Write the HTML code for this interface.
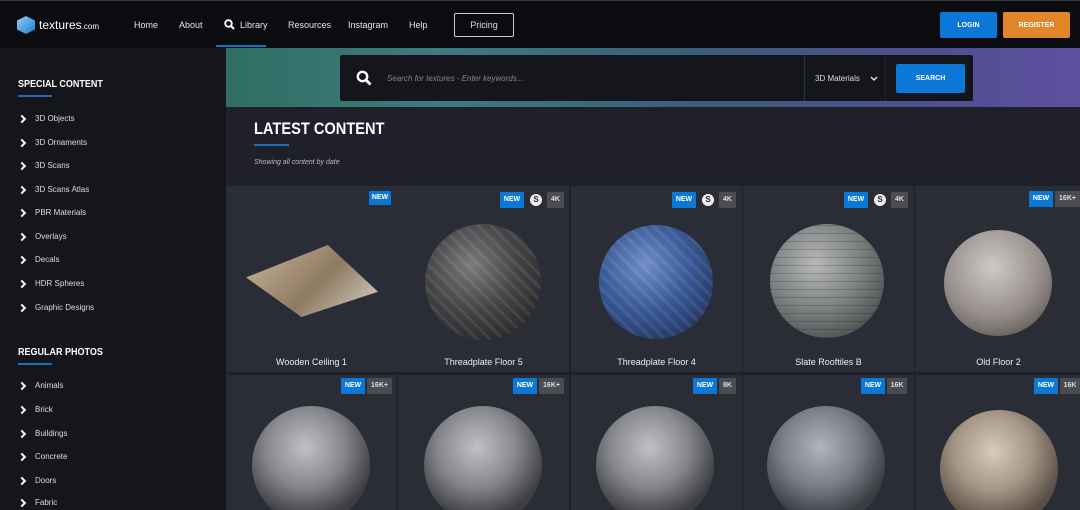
<!DOCTYPE html>
<html style="width:1080px;height:510px;overflow:hidden"><head><meta charset="utf-8"><style>
*{margin:0;padding:0;box-sizing:border-box}
body{width:1080px;height:510px;overflow:hidden;background:#1f2029;font-family:"Liberation Sans",sans-serif;color:#fff}
#w{position:relative;width:1080px;height:510px;overflow:hidden}
.a{position:absolute}
.hdr{left:0;top:0;width:1080px;height:48px;background:#0b0c10;border-top:1px solid #333}
.nav{font-size:9px;color:#e6e6e6;top:20px}
.side{left:0;top:48px;width:226px;height:462px;background:#15161c}
.sh{font-size:10px;font-weight:bold;left:18px;transform:scaleX(.9);transform-origin:left}
.ul{height:2px;background:#1e6fc0;width:34px;left:18px}
.li{left:35px;font-size:8px;color:#ddd}
.chev{position:absolute;left:19px;width:6px;height:6px;border-right:2px solid #fff;border-top:2px solid #fff;transform:rotate(45deg)}
.banner{left:226px;top:48px;width:854px;height:59px;background:linear-gradient(90deg,#2f6e62 0%,#3d7b80 25%,#3a5e7a 55%,#4d4f8e 80%,#5e4f9e 100%)}
.card{background:#2a2d36;width:171px;height:186px}
.nm{font-size:9px;color:#eee;width:171px;text-align:center}
.bd{font-size:7px;font-weight:bold;height:16px;line-height:16px;text-align:center;position:absolute}
.nw{background:#0b78d8;color:#fff}
.gr{background:#4a4c52;color:#ddd}
.sp{border-radius:50%}
.s{position:absolute;width:12px;height:12px;border-radius:50%;background:#eee;color:#222;font-size:8px;font-weight:bold;text-align:center;line-height:12px}
</style></head><body><div id="w">
<div class="a hdr"></div>
<div class="a" style="left:17px;top:16px;width:18px;height:18px;background:linear-gradient(135deg,#8fd0ff,#1f7cc8);clip-path:polygon(50% 0,100% 25%,100% 75%,50% 100%,0 75%,0 25%)"></div>
<div class="a" style="left:39px;top:18px;font-size:12px;color:#fff">textures<span style="font-size:8px">.com</span></div>
<div class="a nav" style="left:134px">Home</div>
<div class="a nav" style="left:179px">About</div>
<svg class="a" style="left:224px;top:19px" width="11" height="11" viewBox="0 0 11 11"><circle cx="4.5" cy="4.5" r="3.3" fill="none" stroke="#fff" stroke-width="1.8"/><path d="M7 7L10 10" stroke="#fff" stroke-width="2"/></svg>
<div class="a nav" style="left:240px">Library</div>
<div class="a" style="left:216px;top:45px;width:50px;height:2px;background:#1e6fc0"></div>
<div class="a nav" style="left:288px">Resources</div>
<div class="a nav" style="left:348px">Instagram</div>
<div class="a nav" style="left:409px">Help</div>
<div class="a" style="left:454px;top:13px;width:60px;height:24px;border:1px solid #ccc;border-radius:2px;font-size:9px;color:#ddd;text-align:center;line-height:22px">Pricing</div>
<div class="a" style="left:940px;top:12px;width:57px;height:26px;background:#0b78d8;border-radius:2px;font-size:7px;font-weight:bold;text-align:center;padding-top:10px">LOGIN</div>
<div class="a" style="left:1003px;top:12px;width:67px;height:26px;background:#e3862a;border-radius:2px;font-size:7px;font-weight:bold;text-align:center;padding-top:10px">REGISTER</div>

<div class="a side"></div>
<div class="a sh" style="top:79px">SPECIAL CONTENT</div>
<div class="a ul" style="top:95px"></div>
<div class="chev" style="top:116px"></div><div class="a li" style="top:114px">3D Objects</div>
<div class="chev" style="top:140px"></div><div class="a li" style="top:138px">3D Ornaments</div>
<div class="chev" style="top:163px"></div><div class="a li" style="top:161px">3D Scans</div>
<div class="chev" style="top:187px"></div><div class="a li" style="top:185px">3D Scans Atlas</div>
<div class="chev" style="top:210px"></div><div class="a li" style="top:208px">PBR Materials</div>
<div class="chev" style="top:234px"></div><div class="a li" style="top:232px">Overlays</div>
<div class="chev" style="top:257px"></div><div class="a li" style="top:255px">Decals</div>
<div class="chev" style="top:281px"></div><div class="a li" style="top:279px">HDR Spheres</div>
<div class="chev" style="top:305px"></div><div class="a li" style="top:303px">Graphic Designs</div>
<div class="a sh" style="top:347px">REGULAR PHOTOS</div>
<div class="a ul" style="top:363px"></div>
<div class="chev" style="top:383px"></div><div class="a li" style="top:381px">Animals</div>
<div class="chev" style="top:407px"></div><div class="a li" style="top:405px">Brick</div>
<div class="chev" style="top:431px"></div><div class="a li" style="top:429px">Buildings</div>
<div class="chev" style="top:454px"></div><div class="a li" style="top:452px">Concrete</div>
<div class="chev" style="top:478px"></div><div class="a li" style="top:476px">Doors</div>
<div class="chev" style="top:500px"></div><div class="a li" style="top:498px">Fabric</div>

<div class="a banner"></div>
<div class="a" style="left:340px;top:55px;width:633px;height:46px;background:#14161c;border-radius:2px"></div>
<svg class="a" style="left:356px;top:70px" width="16" height="16" viewBox="0 0 16 16"><circle cx="6.5" cy="6.5" r="4.7" fill="none" stroke="#fff" stroke-width="2.4"/><path d="M10 10L14.5 14.5" stroke="#fff" stroke-width="2.8"/></svg>
<div class="a" style="left:387px;top:74px;font-size:8px;font-style:italic;color:#888">Search for textures - Enter keywords...</div>
<div class="a" style="left:804px;top:55px;width:1px;height:46px;background:#23314a"></div>
<div class="a" style="left:815px;top:74px;font-size:8px;color:#ddd">3D Materials</div>
<svg class="a" style="left:870px;top:76px" width="8" height="6" viewBox="0 0 8 6"><path d="M1 1L4 4L7 1" fill="none" stroke="#ddd" stroke-width="1.5"/></svg>
<div class="a" style="left:885px;top:55px;width:1px;height:46px;background:#22242a"></div>
<div class="a" style="left:896px;top:64px;width:69px;height:29px;background:#0b78d8;border-radius:2px;font-size:7px;font-weight:bold;text-align:center;padding-top:11px">SEARCH</div>

<div class="a" style="left:254px;top:119px;font-size:17px;font-weight:bold;transform:scaleX(.86);transform-origin:left">LATEST CONTENT</div>
<div class="a" style="left:254px;top:144px;width:35px;height:2px;background:#1e6fc0"></div>
<div class="a" style="left:254px;top:159px;font-size:7px;font-style:italic;color:#bbb">Showing all content by date</div>

<div class="a card" style="left:226px;top:186px;width:343px"></div>
<div class="a card" style="left:571px;top:186px"></div>
<div class="a card" style="left:743px;top:186px"></div>
<div class="a card" style="left:915px;top:186px"></div>
<div class="a card" style="left:226px;top:375px;height:135px"></div>
<div class="a card" style="left:398px;top:375px;height:135px"></div>
<div class="a card" style="left:571px;top:375px;height:135px"></div>
<div class="a card" style="left:743px;top:375px;height:135px"></div>
<div class="a card" style="left:915px;top:375px;width:165px;height:135px"></div>

<div class="a" style="left:246px;top:245px;width:132px;height:72px;background:linear-gradient(135deg,#c9b79a,#8d7a62 55%,#ddd6ca);clip-path:polygon(0 45%,62% 0,100% 65%,42% 100%)"></div>
<div class="a sp" style="left:425px;top:224px;width:116px;height:116px;background:repeating-linear-gradient(45deg,rgba(255,255,255,.08) 0 3px,transparent 3px 9px),radial-gradient(circle at 40% 35%,#7a7a7c,#444446 45%,#1e1e20 95%)"></div>
<div class="a sp" style="left:599px;top:225px;width:114px;height:114px;background:repeating-linear-gradient(45deg,rgba(255,255,255,.08) 0 3px,transparent 3px 9px),radial-gradient(circle at 40% 35%,#6f8ec6,#385896 45%,#1b2a4a 95%)"></div>
<div class="a sp" style="left:770px;top:224px;width:114px;height:114px;background:repeating-linear-gradient(0deg,rgba(0,0,0,.18) 0 1px,transparent 1px 8px),radial-gradient(circle at 40% 35%,#b7b9b9,#787b7b 50%,#3a3c3d 95%)"></div>
<div class="a sp" style="left:944px;top:230px;width:108px;height:106px;background:radial-gradient(circle at 45% 35%,#cfcac6,#948c88 55%,#4a4442 95%)"></div>

<div class="a nm" style="left:226px;top:357px">Wooden Ceiling 1</div>
<div class="a nm" style="left:398px;top:357px">Threadplate Floor 5</div>
<div class="a nm" style="left:571px;top:357px">Threadplate Floor 4</div>
<div class="a nm" style="left:743px;top:357px">Slate Rooftiles B</div>
<div class="a nm" style="left:913px;top:357px">Old Floor 2</div>

<div class="bd nw" style="left:369px;top:191px;width:22px;height:14px;line-height:14px">NEW</div>
<div class="bd nw" style="left:500px;top:192px;width:24px">NEW</div><div class="s" style="left:530px;top:194px">S</div><div class="bd gr" style="left:547px;top:192px;width:17px">4K</div>
<div class="bd nw" style="left:672px;top:192px;width:24px">NEW</div><div class="s" style="left:702px;top:194px">S</div><div class="bd gr" style="left:719px;top:192px;width:17px">4K</div>
<div class="bd nw" style="left:844px;top:192px;width:24px">NEW</div><div class="s" style="left:874px;top:194px">S</div><div class="bd gr" style="left:891px;top:192px;width:17px">4K</div>
<div class="bd nw" style="left:1029px;top:191px;width:24px">NEW</div><div class="bd gr" style="left:1055px;top:191px;width:25px">16K+</div>

<div class="bd nw" style="left:341px;top:378px;width:24px">NEW</div><div class="bd gr" style="left:367px;top:378px;width:25px">16K+</div>
<div class="bd nw" style="left:513px;top:378px;width:24px">NEW</div><div class="bd gr" style="left:539px;top:378px;width:25px">16K+</div>
<div class="bd nw" style="left:693px;top:378px;width:24px">NEW</div><div class="bd gr" style="left:719px;top:378px;width:17px">8K</div>
<div class="bd nw" style="left:861px;top:378px;width:24px">NEW</div><div class="bd gr" style="left:887px;top:378px;width:20px">16K</div>
<div class="bd nw" style="left:1034px;top:378px;width:24px">NEW</div><div class="bd gr" style="left:1060px;top:378px;width:20px">16K</div>

<svg class="a" style="left:226px;top:400px" width="854" height="110" viewBox="0 0 854 110">
<defs>
<radialGradient id="g1" cx="45%" cy="35%" r="60%"><stop offset="0" stop-color="#c0c1c4"/><stop offset=".55" stop-color="#86888d"/><stop offset="1" stop-color="#3c3e42"/></radialGradient>
<radialGradient id="g2" cx="45%" cy="35%" r="60%"><stop offset="0" stop-color="#b0b4bc"/><stop offset=".55" stop-color="#7a7e87"/><stop offset="1" stop-color="#3a3c42"/></radialGradient>
<radialGradient id="g3" cx="45%" cy="35%" r="60%"><stop offset="0" stop-color="#d8cbbb"/><stop offset=".55" stop-color="#a49585"/><stop offset="1" stop-color="#5a4f46"/></radialGradient>
</defs>
<circle cx="85" cy="65" r="59" fill="url(#g1)"/>
<circle cx="257" cy="65" r="59" fill="url(#g1)"/>
<circle cx="429" cy="65" r="59" fill="url(#g1)"/>
<circle cx="600" cy="65" r="59" fill="url(#g2)"/>
<circle cx="773" cy="69" r="59" fill="url(#g3)"/>
</svg>
</div></body></html>
